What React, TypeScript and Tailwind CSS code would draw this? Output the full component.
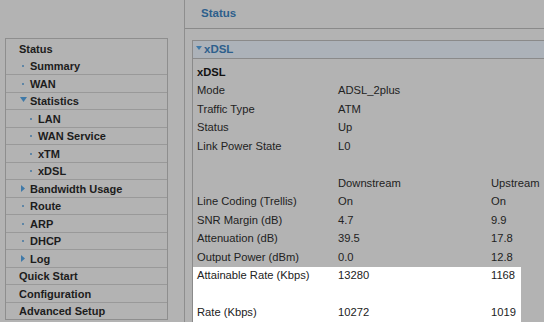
import React from 'react';

type NavItem = { label: string; level: 0 | 1 | 2; icon?: 'dot' | 'down' | 'right'; border?: boolean };

const nav: NavItem[] = [
  { label: 'Summary', level: 1, icon: 'dot', border: false },
  { label: 'WAN', level: 1, icon: 'dot' },
  { label: 'Statistics', level: 1, icon: 'down' },
  { label: 'LAN', level: 2, icon: 'dot' },
  { label: 'WAN Service', level: 2, icon: 'dot' },
  { label: 'xTM', level: 2, icon: 'dot' },
  { label: 'xDSL', level: 2, icon: 'dot' },
  { label: 'Bandwidth Usage', level: 1, icon: 'right' },
  { label: 'Route', level: 1, icon: 'dot' },
  { label: 'ARP', level: 1, icon: 'dot' },
  { label: 'DHCP', level: 1, icon: 'dot' },
  { label: 'Log', level: 1, icon: 'right' },
  { label: 'Quick Start', level: 0 },
  { label: 'Configuration', level: 0 },
  { label: 'Advanced Setup', level: 0 },
];

const rows: { label: string; down?: string; up?: string; bold?: boolean; white?: boolean }[] = [
  { label: 'xDSL', bold: true },
  { label: 'Mode', down: 'ADSL_2plus' },
  { label: 'Traffic Type', down: 'ATM' },
  { label: 'Status', down: 'Up' },
  { label: 'Link Power State', down: 'L0' },
  { label: '' },
  { label: '', down: 'Downstream', up: 'Upstream' },
  { label: 'Line Coding (Trellis)', down: 'On', up: 'On' },
  { label: 'SNR Margin (dB)', down: '4.7', up: '9.9' },
  { label: 'Attenuation (dB)', down: '39.5', up: '17.8' },
  { label: 'Output Power (dBm)', down: '0.0', up: '12.8' },
  { label: 'Attainable Rate (Kbps)', down: '13280', up: '1168', white: true },
  { label: '', white: true },
  { label: 'Rate (Kbps)', down: '10272', up: '1019', white: true },
];

const Icon = ({ kind }: { kind?: NavItem['icon'] }) => {
  if (kind === 'dot') return <span className="inline-block w-[2px] h-[2px] bg-[#5f86a6] mr-[6px]" />;
  if (kind === 'down')
    return (
      <svg width="7" height="5" viewBox="0 0 7 5" className="mr-[3px] -mt-[3px]">
        <path d="M0 0H7L3.5 5Z" fill="#3f79a8" />
      </svg>
    );
  if (kind === 'right')
    return (
      <svg width="4" height="7" viewBox="0 0 4 7" className="mr-[5px]">
        <path d="M0 0L4 3.5L0 7Z" fill="#3f79a8" />
      </svg>
    );
  return null;
};

const indent = (n: NavItem) => {
  if (n.level === 0) return 'pl-[13px]';
  if (n.level === 2) return 'pl-[24px]';
  if (n.icon === 'down') return 'pl-[14px]';
  if (n.icon === 'right') return 'pl-[15px]';
  return 'pl-[16px]';
};

export default function App() {
  return (
    <div
      className="w-[544px] h-[322px] overflow-hidden bg-[#b3b3b3] flex text-[#1c1c1c]"
      style={{ fontFamily: '"Liberation Sans", Arial, sans-serif' }}
    >
      <div className="w-[185px] shrink-0 border-r border-[#8e8e8e] pl-[5px] pt-[38px]">
        <div className="w-[163px] border border-[#8e8e8e] text-[11px] font-bold">
          <div className="h-[17.5px] flex items-center pl-[13px] pt-[2px]">Status</div>
          {nav.map((n, i) => (
            <div
              key={i}
              className={`h-[17.5px] flex items-center pt-[1px] ${n.border === false ? '' : 'border-t border-[#999999]'} ${indent(n)}`}
            >
              <Icon kind={n.icon} />
              <span>{n.label}</span>
            </div>
          ))}
        </div>
      </div>
      <div className="flex-1 flex flex-col">
        <div className="h-[29px] shrink-0 border-b border-[#8a8a8a] flex items-center pl-[16px] text-[11.5px] font-bold text-[#2d5f8c]">
          Status
        </div>
        <div className="ml-[7px] mt-[11px] border-l border-t border-[#8a8a8a] flex-1">
          <div className="h-[18px] bg-[#acb2b9] border-b border-[#8a8a8a] flex items-center pl-[3px] text-[11.5px] font-bold text-[#2d5f8c]">
            <svg width="6" height="4" viewBox="0 0 6 4" className="mr-[2px] -mt-[4px]">
              <path d="M0 0H6L3 4Z" fill="#3f79a8" />
            </svg>
            xDSL
          </div>
          <div className="pt-[4px] text-[11.2px] text-[#222222]">
            {rows.map((r, i) => (
              <div key={i} className={`h-[18.5px] w-[328px] flex items-center pl-[4px] ${r.white ? 'bg-white' : ''}`}>
                <div className={`w-[141px] shrink-0 ${r.bold ? 'font-bold text-[#111111]' : ''}`}>{r.label}</div>
                <div className="w-[153px] shrink-0">{r.down}</div>
                <div>{r.up}</div>
              </div>
            ))}
          </div>
        </div>
      </div>
    </div>
  );
}
